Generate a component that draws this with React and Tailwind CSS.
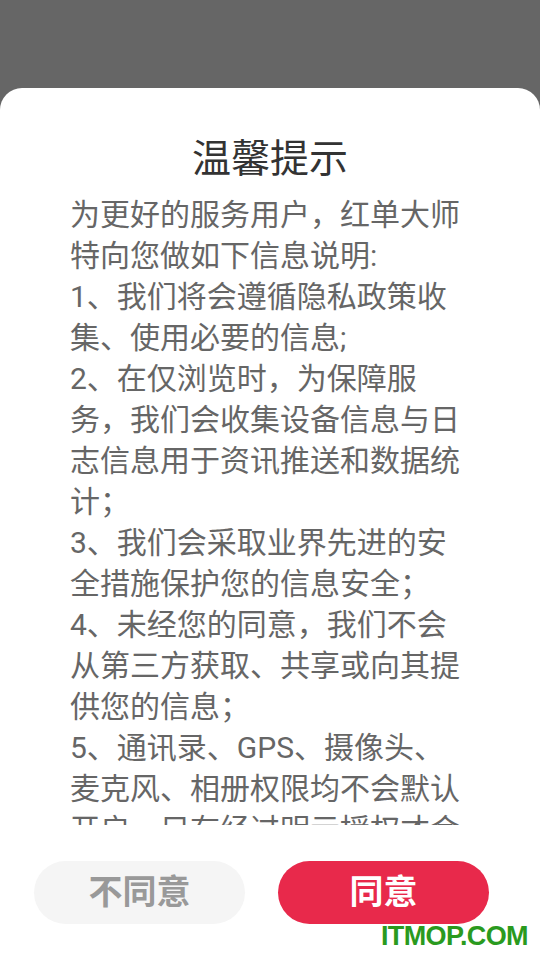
import React from "react";

const lines = [
  "为更好的服务用户，红单大师",
  "特向您做如下信息说明:",
  "1、我们将会遵循隐私政策收",
  "集、使用必要的信息;",
  "2、在仅浏览时，为保障服",
  "务，我们会收集设备信息与日",
  "志信息用于资讯推送和数据统",
  "计；",
  "3、我们会采取业界先进的安",
  "全措施保护您的信息安全；",
  "4、未经您的同意，我们不会",
  "从第三方获取、共享或向其提",
  "供您的信息；",
  "5、通讯录、GPS、摄像头、",
  "麦克风、相册权限均不会默认",
  "开启，只有经过明示授权才会",
];

export default function App() {
  return (
    <div
      className="relative w-[540px] h-[960px] bg-[#666666] overflow-hidden flex flex-col"
      style={{ fontFamily: 'Roboto, "Noto Sans CJK SC", "Noto Sans", sans-serif' }}
    >
      <div className="h-[88px] shrink-0" />
      <div className="flex-1 bg-white rounded-t-[22px] flex flex-col">
        <div className="pt-[47px] text-center text-[39px] leading-[49px] text-[#333333]">
          温馨提示
        </div>
        <div className="mt-[10px] h-[631px] overflow-hidden pl-[70px]">
          {lines.map((l, i) => (
            <div
              key={i}
              className="whitespace-nowrap text-[30px] leading-[41px] text-[#666666]"
            >
              {l}
            </div>
          ))}
        </div>
        <div className="mt-[36px] flex pl-[34px] gap-[33px]">
          <button className="w-[211px] h-[63px] rounded-full bg-[#f5f5f5] text-[#999999] text-[34px] font-bold flex items-center justify-center">
            不同意
          </button>
          <button className="w-[211px] h-[63px] rounded-full bg-[#e8294b] text-white text-[34px] font-bold flex items-center justify-center">
            同意
          </button>
        </div>
      </div>
      <div
        className="absolute right-[12px] bottom-[10px] text-[27px] leading-[27px] font-bold text-[#2a9a1e] tracking-[-0.6px]"
        style={{ fontFamily: '"Liberation Sans", Arial, sans-serif' }}
      >
        ITMOP.COM
      </div>
    </div>
  );
}
